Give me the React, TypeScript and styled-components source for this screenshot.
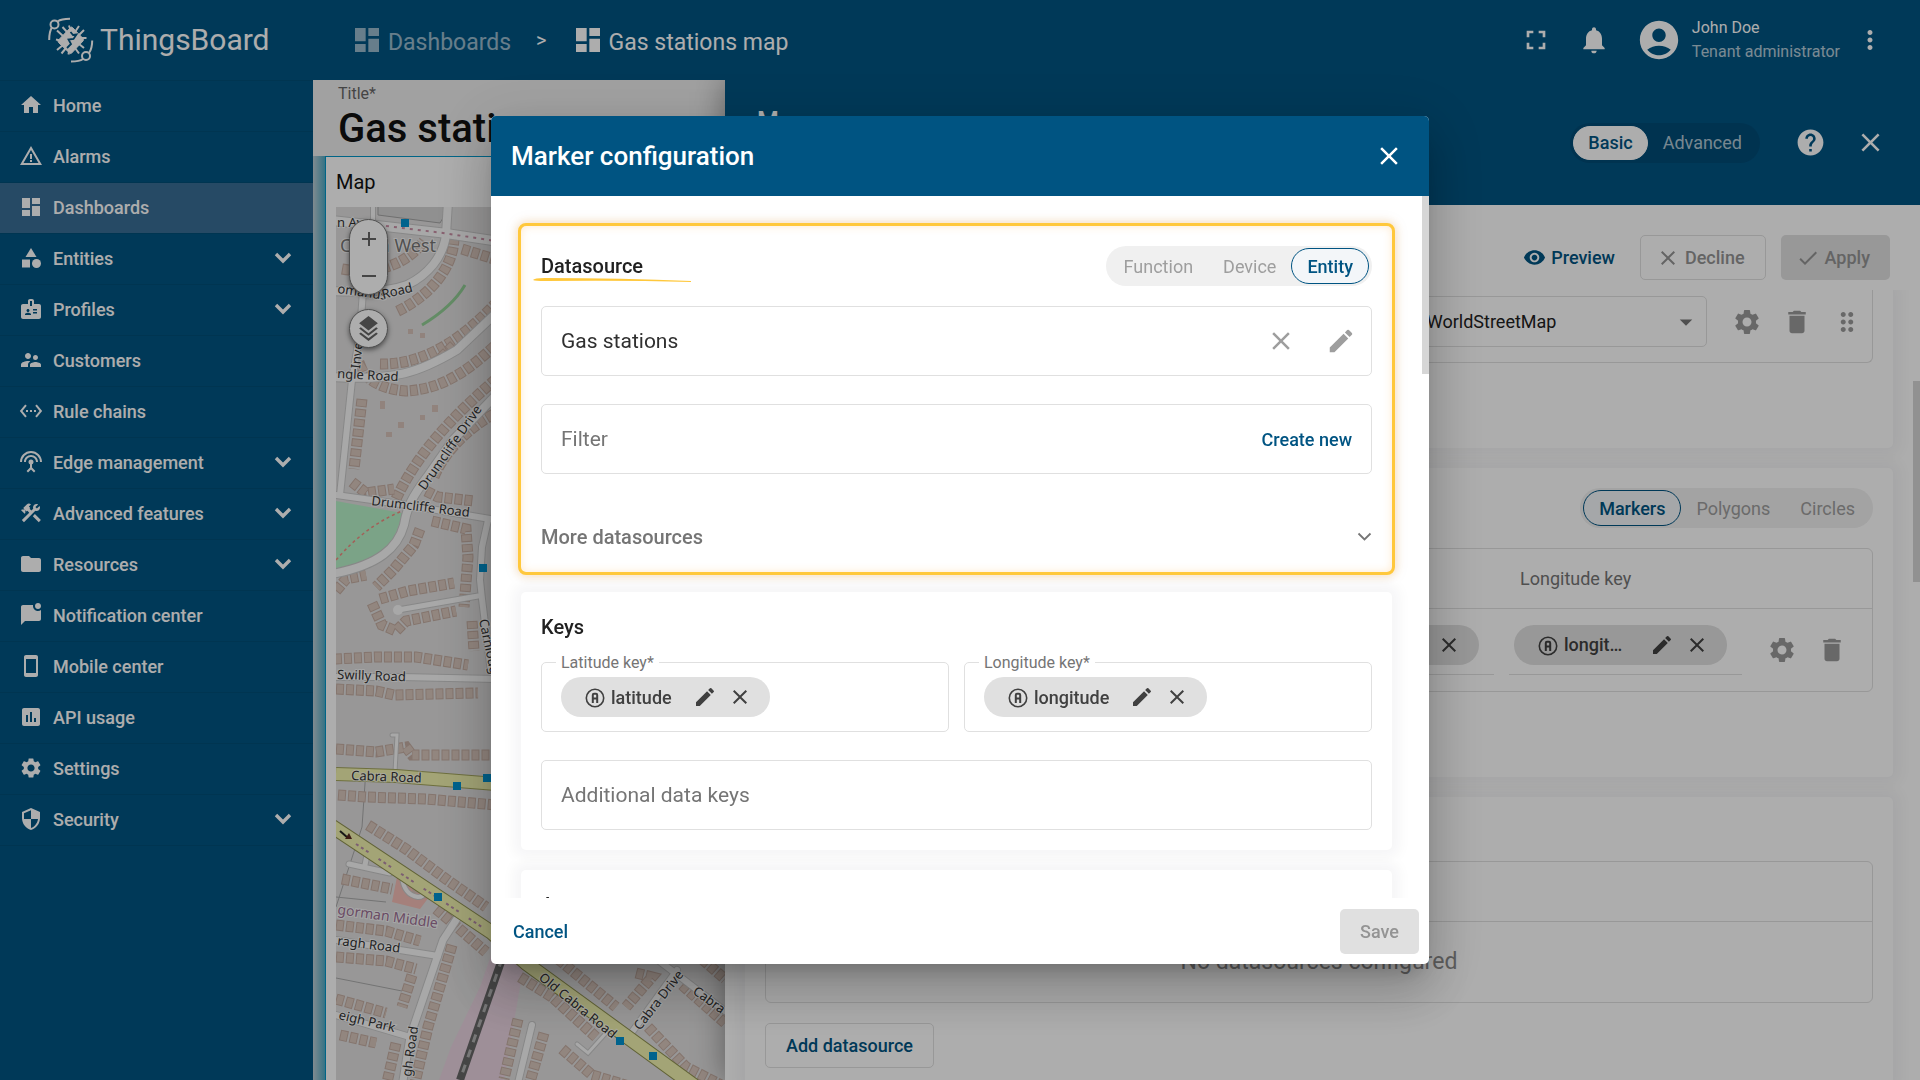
import React from "react";
import styled, { createGlobalStyle, css } from "styled-components";
import {
  MdHome,
  MdWarningAmber,
  MdDashboard,
  MdCategory,
  MdBadge,
  MdSupervisorAccount,
  MdSettingsEthernet,
  MdSettingsInputAntenna,
  MdConstruction,
  MdFolder,
  MdSmartphone,
  MdInsertChart,
  MdSettings,
  MdSecurity,
  MdFullscreen,
  MdNotifications,
  MdAccountCircle,
  MdMoreVert,
  MdHelp,
  MdClose,
  MdVisibility,
  MdCheck,
  MdDelete,
  MdDragIndicator,
  MdEdit,
  MdArrowDropDown,
  MdAdd,
  MdRemove,
} from "react-icons/md";

const primary = "#005482";
const line = "#e0e0e0";
const muted = "#757575";

const GlobalStyle = createGlobalStyle`
  *, *::before, *::after { box-sizing: border-box; }
  body {
    margin: 0;
    overflow: hidden;
    font-family: Roboto, "Liberation Sans", sans-serif;
    font-size: 18px;
    color: #212121;
    background: #fff;
  }
  button, input, select { font: inherit; color: inherit; }
  button { border: 0; padding: 0; background: none; cursor: pointer; }
  h1, h2, h3, p { margin: 0; font-weight: 500; }
  svg { display: block; flex: none; }
`;

/* ---------- shell ---------- */

const Shell = styled.div`
  display: grid;
  grid-template-columns: 313px minmax(0, 1fr);
  grid-template-rows: 80px minmax(0, 1fr);
  height: 100vh;
`;

const Brand = styled.a`
  display: flex;
  align-items: center;
  padding-left: 40px;
  background: ${primary};
  color: #fff;
  font-size: 30px;
  line-height: 40px;
  text-decoration: none;
`;

const TopBar = styled.header`
  display: flex;
  align-items: center;
  padding: 0 35px 0 38px;
  background: ${primary};
  color: #fff;
  z-index: 2;
`;

const Crumbs = styled.nav`
  display: flex;
  align-items: center;
  flex: 1;
  font-size: 23px;
  line-height: 28px;
`;

const Crumb = styled.a<{ $faded?: boolean }>`
  display: flex;
  align-items: center;
  gap: 5px;
  color: inherit;
  text-decoration: none;
  opacity: ${(p) => (p.$faded ? 0.6 : 1)};
  & > span { padding-top: 5px; }
`;

const CrumbArrow = styled.span`
  padding: 0 25px;
  font-size: 20px;
`;

const TopActions = styled.div`
  display: flex;
  align-items: center;
  gap: 26px;
`;

const UserBlock = styled.div`
  display: flex;
  align-items: center;
  gap: 10px;
`;

const UserName = styled.div`
  display: flex;
  flex-direction: column;
  padding-right: 5px;
  font-size: 16px;
  line-height: 24px;
  & > span:last-child { opacity: 0.7; }
`;

const SideNav = styled.nav`
  display: flex;
  flex-direction: column;
  background: ${primary};
  color: #fff;
`;

const NavItem = styled.a<{ $active?: boolean }>`
  display: flex;
  align-items: center;
  gap: 10px;
  height: 51px;
  padding: 0 21px 2px 19px;
  border-top: 1px solid #004e78;
  background: ${(p) => (p.$active ? "#386d96" : "transparent")};
  color: inherit;
  font-weight: 500;
  text-decoration: none;
  & > span { flex: 1; }
`;

const NavEnd = styled.div`
  height: 1px;
  background: #004e78;
`;

/* ---------- dashboard ---------- */

const Main = styled.main`
  display: grid;
  grid-template-columns: minmax(0, 1fr) minmax(0, 1195px);
  min-height: 0;
`;

const Board = styled.section`
  display: flex;
  flex-direction: column;
  min-width: 0;
  overflow: hidden;
  background: #eee;
`;

const TitleField = styled.label`
  display: flex;
  flex-direction: column;
  height: 76px;
  padding: 4px 0 0 25px;
  color: #666;
  font-size: 16px;
  line-height: 20px;
`;

const TitleInput = styled.input`
  width: 100%;
  height: 48px;
  padding: 0;
  border: 0;
  background: none;
  color: #111;
  font-size: 40px;
  font-weight: 500;
`;

const WidgetWrap = styled.div`
  display: flex;
  flex: 1;
  min-height: 0;
  padding-left: 12px;
  background: linear-gradient(90deg, #bcccd3, #4fa9c4 12px);
`;

const Widget = styled.article`
  display: flex;
  flex: 1;
  flex-direction: column;
  min-width: 0;
  padding-left: 10px;
  border: solid #0096c8;
  border-width: 1px 0 0 1px;
  background: #fff;
`;

const WidgetTitle = styled.h2`
  height: 50px;
  color: #111;
  font-size: 20px;
  font-weight: 400;
  line-height: 50px;
`;

const MapBox = styled.div`
  position: relative;
  flex: 1;
  min-height: 0;
  overflow: hidden;
  background: #e0dfdf;
`;

const MapControls = styled.div`
  position: absolute;
  top: 12px;
  left: 13px;
  display: flex;
  flex-direction: column;
  gap: 14px;
`;

const MapPill = styled.div`
  display: flex;
  flex-direction: column;
  width: 39px;
  border: 1px solid #777;
  border-radius: 20px;
  background: #fff;
  box-shadow: 0 2px 5px rgba(0, 0, 0, 0.5);
  color: #666;
`;

const MapButton = styled.button`
  display: grid;
  place-items: center;
  height: 37px;
`;

/* ---------- drawer ---------- */

const Drawer = styled.aside`
  display: flex;
  flex-direction: column;
  min-width: 0;
  min-height: 0;
  background: #fff;
  box-shadow: 0 0 30px rgba(0, 0, 0, 0.4);
  z-index: 1;
`;

const DrawerHead = styled.header`
  display: flex;
  align-items: center;
  height: 125px;
  flex: none;
  padding: 0 34px 0 32px;
  background: ${primary};
  color: #fff;
`;

const DrawerTitle = styled.h2`
  flex: 1;
  align-self: flex-start;
  padding-top: 26px;
  font-size: 25px;
  line-height: 32px;
`;

const DrawerIcons = styled.div`
  display: flex;
  gap: 28px;
  padding-left: 34px;
`;

const Toggle = styled.div<{ $dark?: boolean }>`
  display: flex;
  align-items: center;
  height: 40px;
  padding: 0 3px;
  border-radius: 20px;
  background: ${(p) => (p.$dark ? "#004c77" : "#f0f0f0")};
`;

const Segment = styled.button<{ $on?: boolean; $dark?: boolean }>`
  height: ${(p) => (p.$dark ? 34 : 36)}px;
  padding: 0 14px;
  border: 1px solid transparent;
  border-radius: 18px;
  color: ${(p) => (p.$dark ? "rgba(255,255,255,.7)" : "#9e9e9e")};
  ${(p) =>
    p.$on &&
    css`
      padding: 0 ${p.$dark ? 14 : 15}px;
      border-color: ${p.$dark ? "#fff" : primary};
      background: ${p.$dark ? "#fff" : "#f3f6f9"};
      color: ${primary};
      font-weight: 500;
    `}
`;

const DrawerActions = styled.div`
  display: flex;
  align-items: center;
  justify-content: flex-end;
  gap: 15px;
  height: 85px;
  flex: none;
  padding: 30px 30px 10px;
`;

const Action = styled.button<{ $kind: "text" | "outline" | "fill" | "link"; $icon?: boolean }>`
  display: flex;
  align-items: center;
  justify-content: center;
  gap: 5px;
  height: 45px;
  padding: 0 20px 0 ${(p) => (p.$icon ? 15 : 20)}px;
  border-radius: 5px;
  font-weight: 500;
  color: ${primary};
  ${(p) => p.$kind === "text" && css`padding: 0 10px;`}
  ${(p) => p.$kind === "link" && css`padding: 0 5px;`}
  ${(p) => p.$kind === "outline" && css`border: 1px solid ${line};`}
  ${(p) => p.$kind === "fill" && css`background: ${line};`}
  &:disabled { color: #949494; }
`;

const DrawerBody = styled.div`
  position: relative;
  display: flex;
  flex: 1;
  flex-direction: column;
  gap: 20px;
  min-height: 0;
  overflow: hidden;
  padding: 0 27px 0 20px;
`;

const Panel = styled.section<{ $first?: boolean; $tail?: number }>`
  flex: none;
  padding: ${(p) => (p.$first ? 0 : 20)}px 20px ${(p) => p.$tail ?? 20}px;
  border-radius: ${(p) => (p.$first ? "0 0 5px 5px" : "5px")};
  background: #fff;
  box-shadow: 0 0 13px 8px rgba(11, 17, 51, 0.04);
`;

const PanelHead = styled.div<{ $plain?: boolean }>`
  display: flex;
  align-items: center;
  justify-content: space-between;
  height: ${(p) => (p.$plain ? 24 : 40)}px;
  margin-bottom: 20px;
`;

const PanelTitle = styled.h3`
  font-size: 20px;
  line-height: 24px;
`;

const Thumb = styled.div<{ $top: number; $height: number }>`
  position: absolute;
  top: ${(p) => p.$top}px;
  right: 0;
  width: 7px;
  height: ${(p) => p.$height}px;
  background: #d6d6d6;
`;

const LayerRow = styled.div`
  display: flex;
  align-items: center;
  padding: 6px 9px 15px 20px;
  border: 1px solid ${line};
  border-top: 0;
  border-radius: 0 0 6px 6px;
  color: #9a9a9a;
`;

const SelectBox = styled.label`
  display: flex;
  align-items: center;
  width: 331px;
  height: 51px;
  margin-left: auto;
  padding-right: 5px;
  border: 1px solid ${line};
  border-radius: 5px;
  color: ${muted};
`;

const Select = styled.select`
  flex: 1;
  appearance: none;
  height: 49px;
  padding: 0 0 0 15px;
  border: 0;
  background: none;
  color: #212121;
`;

const IconButton = styled.button<{ $size?: number }>`
  display: grid;
  place-items: center;
  width: ${(p) => p.$size ?? 32}px;
  height: ${(p) => p.$size ?? 32}px;
`;

const TableFrame = styled.div`
  border: 1px solid ${line};
  border-radius: 6px;
`;

const KeyTable = styled.table`
  width: 100%;
  border-collapse: collapse;
  table-layout: fixed;
  & th {
    height: 59px;
    padding: 0 0 0 26px;
    border-bottom: 1px solid ${line};
    color: ${muted};
    font-weight: 400;
    text-align: left;
  }
  & td {
    height: 83px;
    padding: 0 0 0 15px;
    vertical-align: middle;
  }
`;

const KeyCell = styled.div`
  display: flex;
  padding: 0 15px 9px 5px;
  border-bottom: 1px solid ${line};
`;

const RowActions = styled.div<{ $lead: number }>`
  display: flex;
  gap: 18px;
  padding-left: ${(p) => p.$lead}px;
  color: #9a9a9a;
`;

const Chip = styled.span<{ $fill?: boolean }>`
  display: flex;
  align-items: center;
  height: 40px;
  padding: 0 18px 0 22px;
  border-radius: 20px;
  background: ${line};
  color: #404040;
  font-weight: 500;
  ${(p) => p.$fill && css`flex: 1;`}
`;

const ChipText = styled.span<{ $fill?: boolean }>`
  margin: 0 21px 0 4px;
  ${(p) => p.$fill && css`flex: 1;`}
`;

const ChipButtons = styled.span`
  display: flex;
  gap: 11px;
`;

const EmptyFrame = styled(TableFrame)`
  height: 142px;
`;

const EmptyHead = styled.div`
  height: 60px;
  border-bottom: 1px solid ${line};
`;

const EmptyText = styled.p`
  color: #8a8a8a;
  font-size: 23px;
  font-weight: 400;
  line-height: 80px;
  text-align: center;
`;

const ButtonLine = styled.div`
  display: flex;
  padding-top: 20px;
`;

/* ---------- dialog ---------- */

const Backdrop = styled.div`
  position: fixed;
  inset: 0;
  z-index: 10;
  display: grid;
  place-items: center;
  background: rgba(0, 0, 0, 0.32);
`;

const Dialog = styled.div`
  display: flex;
  flex-direction: column;
  width: min(938px, 90vw);
  overflow: hidden;
  border-radius: 5px;
  background: #fff;
  box-shadow: 0 14px 19px -9px rgba(0, 0, 0, 0.2), 0 30px 48px 4px rgba(0, 0, 0, 0.14),
    0 11px 58px 10px rgba(0, 0, 0, 0.12);
`;

const DialogHead = styled.header`
  display: flex;
  align-items: center;
  justify-content: space-between;
  height: 80px;
  padding: 0 24px 0 20px;
  background: ${primary};
  color: #fff;
`;

const DialogTitle = styled.h1`
  font-size: 26px;
  line-height: 32px;
`;

const DialogBody = styled.div`
  position: relative;
  display: flex;
  flex-direction: column;
  gap: 20px;
  height: 65vh;
  padding: 30px 37px 0 30px;
  overflow: hidden;
`;

const Card = styled.section<{ $focus?: boolean }>`
  position: relative;
  flex: none;
  padding: 20px;
  border-radius: 5px;
  background: #fff;
  box-shadow: 0 0 13px 8px rgba(11, 17, 51, 0.04);
  ${(p) =>
    p.$focus &&
    css`
      outline: 3px solid #ffc83c;
      box-shadow: 0 0 8px 4px rgba(255, 170, 60, 0.3), inset 0 0 8px rgba(255, 170, 60, 0.25),
        0 0 13px 8px rgba(11, 17, 51, 0.04);
    `}
`;

const CardHead = styled.div<{ $plain?: boolean }>`
  position: relative;
  display: flex;
  align-items: center;
  justify-content: space-between;
  height: ${(p) => (p.$plain ? 30 : 40)}px;
  margin-bottom: 20px;
`;

const Swash = styled.svg`
  position: absolute;
  left: -8px;
  bottom: 2px;
`;

const Fields = styled.div`
  display: grid;
  grid-template-columns: 1fr 1fr;
  gap: 28px 15px;
`;

const Field = styled.div<{ $wide?: boolean }>`
  position: relative;
  display: flex;
  align-items: center;
  height: 70px;
  padding: 0 14px 0 19px;
  border: 1px solid ${line};
  border-radius: 5px;
  ${(p) => p.$wide && css`grid-column: 1 / -1;`}
`;

const FieldLabel = styled.span`
  position: absolute;
  top: -10px;
  left: 14px;
  padding: 0 5px;
  background: #fff;
  color: ${muted};
  font-size: 16px;
  line-height: 20px;
`;

const TextInput = styled.input`
  flex: 1;
  min-width: 0;
  height: 40px;
  padding: 0;
  border: 0;
  background: none;
  outline: 0;
  color: #303030;
  font-size: 21px;
  &::placeholder { color: ${muted}; opacity: 1; }
`;

const FieldIcons = styled.div`
  display: flex;
  gap: 28px;
  color: #9e9e9e;
`;

const More = styled.button`
  display: flex;
  align-items: center;
  justify-content: space-between;
  width: 100%;
  height: 30px;
  margin-top: 48px;
  color: ${muted};
  font-size: 20px;
  font-weight: 500;
`;

const DialogFoot = styled.footer`
  display: flex;
  align-items: center;
  justify-content: space-between;
  height: 66px;
  padding: 0 10px 0 12px;
`;

/* ---------- drawings ---------- */

const Logo = () => (
  <svg width="60" height="64" viewBox="0 0 60 64" fill="none" stroke="currentColor" strokeWidth="2" aria-hidden="true">
    <circle cx="14.5" cy="16.5" r="4" />
    <path d="M17.5 13.5C21 11 25 10.8 30 10.8M11.8 19.6C9.6 23 9.2 27 9.2 32" />
    <circle cx="46" cy="48" r="4" />
    <path d="M49 45C51.5 41.5 52.2 38 52.2 32.5M43 51C40 53.2 36 53.5 31 53.5" />
    <path d="M17 22.5L23 28M22.5 19L27 24M16 31.5L20 32.5M39 18L35 24M44 22L39 27M46.5 30H41M44 40L39 36M39 45.5L35 40M28.5 46.5L29.5 40M17 42L23 37M21.5 45.5L26 40M29 17.5L30.5 22" />
    <path
      d="M32.5 19.5L43 30.5Q44 31.5 43 33L31.5 45.2Q30.5 46 29.5 45L18.5 34.5Q17.5 33.3 18.5 32L30.5 19.6Q31.5 18.6 32.5 19.5Z"
      fill="currentColor"
      strokeWidth="1"
    />
    <path d="M30.5 24L33 27L36.5 26.5L33.5 31L28.5 31.5L31 36L27 40" stroke={primary} strokeWidth="1.8" />
  </svg>
);

const MessageBadge = () => (
  <svg width="24" height="24" viewBox="0 0 24 24" fill="currentColor" aria-hidden="true">
    <path d="M22 7V16C22 17.1 21.1 18 20 18H6L2 22V4C2 2.9 2.9 2 4 2H14.1C14 2.3 14 2.7 14 3C14 5.8 16.2 8 19 8C20.1 8 21.2 7.6 22 7M16 3C16 4.7 17.3 6 19 6S22 4.7 22 3 20.7 0 19 0 16 1.3 16 3Z" />
  </svg>
);

const LayersTriple = () => (
  <svg width="25" height="25" viewBox="0 0 24 24" fill="currentColor" aria-hidden="true">
    <path d="M12 0L3 7L4.63 8.27L12 14L19.36 8.27L21 7L12 0M19.37 10.73L12 16.47L4.62 10.74L3 12L12 19L21 12L19.37 10.73M19.37 15.73L12 21.47L4.62 15.74L3 17L12 24L21 17L19.37 15.73Z" />
  </svg>
);

const NavChevron = () => (
  <svg width="18" height="12" viewBox="0 0 18 12" fill="none" stroke="currentColor" strokeWidth="3.4" aria-hidden="true">
    <path d="M2 2L9 9L16 2" />
  </svg>
);

const ThinChevron = () => (
  <svg width="15" height="10" viewBox="0 0 15 10" fill="none" stroke="currentColor" strokeWidth="1.8" aria-hidden="true">
    <path d="M1.5 1.5L7.5 7.5L13.5 1.5" />
  </svg>
);

const AttributeIcon = () => (
  <svg width="24" height="24" viewBox="0 0 24 24" fill="none" stroke="currentColor" aria-hidden="true">
    <circle cx="12" cy="13" r="8.7" strokeWidth="1.6" />
    <path d="M9.8 18V10Q9.8 8.8 11 8.8H13Q14.2 8.8 14.2 10V18M9.8 13.5H14.2" strokeWidth="2" />
  </svg>
);

const roadPaths: Array<[string, number]> = [
  ["M37 -5V15", 4],
  ["M0 14L54 20L107 26L160 34", 9],
  ["M112 -5L110 28C107 50 92 68 71 78C48 86 24 85 -4 84", 8],
  ["M27 84L24 126L16 173L4 288", 6],
  ["M-4 170C60 174 84 165 121 143L175 92", 8],
  ["M160 188L117 233L91 270C76 290 71 300 68 318C62 340 44 358 -4 367", 8],
  ["M0 288L71 298L160 313", 6],
  ["M152 313L146 340L144 373L146 392L155 465", 6],
  ["M62 403L142 389", 5],
  ["M-4 470L65 470L160 472", 6],
  ["M56 528H61L59 565", 3],
  ["M13 657L54 666M31 648L29 658", 5],
  ["M122 710L107 733L74 830L66 880", 7],
  ["M0 733L102 749", 6],
  ["M0 808L74 830", 6],
  ["M66 670Q68 688 82 690Q88 690 90 684", 4],
  ["M341 763L291 832", 6],
  ["M318 750L389 804", 6],
  ["M196 818L181 880", 6],
  ["M241 837L252 846L270 826", 3],
];

const houseRows = [
  "M6 62C40 68 70 58 88 34",
  "M118 30C118 62 92 90 60 105",
  "M126 42L158 52",
  "M44 157C90 158 128 130 160 96",
  "M30 158C20 162 36 182 70 184C110 182 136 160 164 134",
  "M118 138L104 152",
  "M26 192L18 262",
  "M60 292C80 250 110 215 160 172",
  "M98 270C110 240 140 216 160 206",
  "M16 275L30 286L58 282",
  "M90 284L102 290L138 294",
  "M84 322L78 338L58 362L40 380",
  "M96 314L130 322L132 350L128 400",
  "M0 384L10 372L30 368",
  "M44 392L72 384L118 376",
  "M36 396L46 418L60 424L70 414L120 404",
  "M136 414L138 444",
  "M-2 452L40 450L80 450L132 458",
  "M0 482L40 484L58 488L142 486",
  "M0 542L40 545L70 540L76 548L160 548",
  "M2 588L30 590L90 592L160 598",
  "M32 618L70 642L110 672L150 700",
  "M6 672L56 682",
  "M0 718L50 724L84 734",
  "M116 738L112 752L92 820L78 880",
  "M0 750L50 754L80 762",
  "M76 768L66 800",
  "M0 792L50 806",
  "M4 828L40 836",
  "M60 836L50 880",
  "M100 702L112 712L150 745",
  "M184 770L216 790L260 830",
  "M222 752L280 800",
  "M300 766L316 770L290 800",
  "M182 812L168 872",
  "M208 826L194 875",
  "M226 842L256 868L296 880",
  "M312 820L350 860L389 880",
  "M346 778L389 816",
  "M366 752L389 772",
];

const markers = [
  [69, 16],
  [147, 361],
  [121, 579],
  [151, 571],
  [102, 690],
  [284, 834],
  [317, 849],
];

const StreetLabel = styled.text`
  fill: #333;
  font-family: "Noto Sans", "Open Sans", sans-serif;
  font-size: 13px;
  paint-order: stroke;
  stroke: rgba(255, 255, 255, 0.7);
  stroke-width: 2px;
`;

const PlaceLabel = styled(StreetLabel)<{ $tone: string; $size: number }>`
  fill: ${(p) => p.$tone};
  font-size: ${(p) => p.$size}px;
`;

const StreetMap = () => (
  <svg width="389" height="873" viewBox="0 0 389 873" fill="none" role="img" aria-label="Street map">
    <rect width="389" height="873" fill="#e0dfdf" />
    <path d="M0 294L66 306Q58 345 30 355Q16 361 0 361Z" fill="#b6f0c8" />
    <path d="M0 353C20 330 40 315 66 304" stroke="#f08c80" strokeWidth="1.5" strokeDasharray="3 3" />
    <path d="M86 118Q116 100 129 78" stroke="#93cf96" strokeWidth="3" />
    <path d="M42 -2V8L104 16Q108 12 108 4V-2Z" fill="#d4d4d4" stroke="#a5a5a5" />
    <path d="M61 670L56 695L84 702L96 686L88 680Z" fill="#f3bdb5" />
    <path d="M158 740L144 780L115 840L103 873H168L190 745Z" fill="#e9d3e0" />
    <path d="M30 562L26 620L0 700M0 690L50 695M0 771L66 784" stroke="#aaa" />
    {houseRows.map((d) => (
      <g key={d}>
        <path d={d} stroke="#c4ada2" strokeWidth="11" strokeDasharray="8 2" />
        <path d={d} stroke="#d8c6bc" strokeWidth="9" strokeDasharray="6 4" strokeDashoffset="-1" />
      </g>
    ))}
    <path d="M50 225h6v5h-6zM62 215h6v6h-6zM84 208h5v5h-5zM72 122h5v5h-5zM84 126h5v5h-5zM96 198h6v7h-6zM44 194h5v8h-5z" fill="#d6c2b8" />
    <path d="M78 672h8v14h-10z" fill="#d6c2b8" />
    {roadPaths.map(([d, w]) => (
      <path key={d} d={d} stroke="#c8c8c8" strokeWidth={w + 2} strokeLinecap="round" />
    ))}
    {roadPaths.map(([d, w]) => (
      <path key={d} d={d} stroke="#f8f8f8" strokeWidth={w} strokeLinecap="round" />
    ))}
    <circle cx="62" cy="403" r="5" fill="#f8f8f8" />
    <path d="M50 19L107 26L160 34" stroke="#c98fa5" strokeWidth="2" strokeDasharray="3 5" />
    <path d="M0 567L60 569L160 577" stroke="#a2a45c" strokeWidth="14" />
    <path d="M0 567L60 569L160 577" stroke="#f0f2ae" strokeWidth="12" />
    <path d="M-6 618L155 725L191 757L360 880" stroke="#8f9150" strokeWidth="15" />
    <path d="M-6 618L155 725L191 757L360 880" stroke="#f0f2ae" strokeWidth="13" />
    <path d="M20 637L155 726" stroke="#b78ca8" strokeWidth="2" strokeDasharray="3 3 3 3 3 12" />
    <path d="M4 624L12 631" stroke="#222" strokeWidth="2" />
    <path d="M16 632L9 632L13 626Z" fill="#5a2a20" />
    <path d="M166 752L124 873" stroke="#666" strokeWidth="8" />
    <path d="M166 752L124 873" stroke="#b0b0b0" strokeWidth="3" strokeDasharray="8 8" />
    <StreetLabel x="1" y="20">n Ave</StreetLabel>
    <PlaceLabel $tone="#777" $size={18} x="4" y="45">Cabra West</PlaceLabel>
    <StreetLabel transform="translate(1 86) rotate(8)">omanus</StreetLabel>
    <StreetLabel transform="translate(47 92) rotate(-14)">Road</StreetLabel>
    <StreetLabel transform="translate(24 162) rotate(-84)">Inver</StreetLabel>
    <StreetLabel transform="translate(1 171) rotate(3)">ngle Road</StreetLabel>
    <StreetLabel transform="translate(89 284) rotate(-55)">Drumcliffe Drive</StreetLabel>
    <StreetLabel transform="translate(35 298) rotate(7)">Drumcliffe Road</StreetLabel>
    <StreetLabel transform="translate(143 413) rotate(78)">Carnloug</StreetLabel>
    <StreetLabel transform="translate(1 472) rotate(2)">Swilly Road</StreetLabel>
    <StreetLabel transform="translate(15 573) rotate(2)">Cabra Road</StreetLabel>
    <PlaceLabel $tone="#9c6f93" $size={14} transform="translate(1 707) rotate(8)">gorman Middle</PlaceLabel>
    <StreetLabel transform="translate(1 738) rotate(7)">ragh Road</StreetLabel>
    <StreetLabel transform="translate(2 812) rotate(13)">eigh Park</StreetLabel>
    <StreetLabel transform="translate(75 870) rotate(-82)">gh Road</StreetLabel>
    <StreetLabel transform="translate(202 772) rotate(39)">Old Cabra Road</StreetLabel>
    <StreetLabel transform="translate(304 824) rotate(-52)">Cabra Drive</StreetLabel>
    <StreetLabel transform="translate(356 786) rotate(36)">Cabra</StreetLabel>
    {markers.map(([x, y]) => (
      <rect key={`${x}-${y}`} x={x - 4} y={y - 4} width="8" height="8" fill="#0092d0" />
    ))}
  </svg>
);

/* ---------- pieces ---------- */

const navItems: Array<{ label: string; icon: React.ReactNode; open?: boolean; active?: boolean }> = [
  { label: "Home", icon: <MdHome size={24} /> },
  { label: "Alarms", icon: <MdWarningAmber size={24} /> },
  { label: "Dashboards", icon: <MdDashboard size={24} />, active: true },
  { label: "Entities", icon: <MdCategory size={24} />, open: true },
  { label: "Profiles", icon: <MdBadge size={24} />, open: true },
  { label: "Customers", icon: <MdSupervisorAccount size={24} /> },
  { label: "Rule chains", icon: <MdSettingsEthernet size={24} /> },
  { label: "Edge management", icon: <MdSettingsInputAntenna size={24} />, open: true },
  { label: "Advanced features", icon: <MdConstruction size={24} />, open: true },
  { label: "Resources", icon: <MdFolder size={24} />, open: true },
  { label: "Notification center", icon: <MessageBadge /> },
  { label: "Mobile center", icon: <MdSmartphone size={24} /> },
  { label: "API usage", icon: <MdInsertChart size={24} /> },
  { label: "Settings", icon: <MdSettings size={24} /> },
  { label: "Security", icon: <MdSecurity size={24} />, open: true },
];

const KeyChip = ({ name, fill }: { name: string; fill?: boolean }) => (
  <Chip $fill={fill}>
    <AttributeIcon />
    <ChipText $fill={fill}>{name}</ChipText>
    <ChipButtons>
      <IconButton $size={24} aria-label="Edit key">
        <MdEdit size={24} />
      </IconButton>
      <IconButton $size={24} aria-label="Remove key">
        <MdClose size={24} />
      </IconButton>
    </ChipButtons>
  </Chip>
);

const Segments = ({ items, active, dark }: { items: string[]; active: string; dark?: boolean }) => (
  <Toggle $dark={dark} role="group">
    {items.map((item) => (
      <Segment key={item} $dark={dark} $on={item === active} aria-pressed={item === active}>
        {item}
      </Segment>
    ))}
  </Toggle>
);

const MarkerDialog = () => (
  <Backdrop>
    <Dialog role="dialog" aria-modal="true" aria-labelledby="dialog-title">
      <DialogHead>
        <DialogTitle id="dialog-title">Marker configuration</DialogTitle>
        <IconButton aria-label="Close">
          <MdClose size={30} />
        </IconButton>
      </DialogHead>
      <DialogBody>
        <Card $focus>
          <CardHead>
            <PanelTitle>Datasource</PanelTitle>
            <Segments items={["Function", "Device", "Entity"]} active="Entity" />
            <Swash width="158" height="6" viewBox="0 0 158 6" aria-hidden="true">
              <path d="M0 2Q1 0 12 0Q90 0 158 3V4Q90 2 12 3Q2 3 0 2Z" fill="#ffc83c" />
            </Swash>
          </CardHead>
          <Fields>
            <Field $wide>
              <TextInput aria-label="Entity alias" defaultValue="Gas stations" />
              <FieldIcons>
                <IconButton aria-label="Clear">
                  <MdClose size={30} />
                </IconButton>
                <IconButton aria-label="Edit alias">
                  <MdEdit size={30} />
                </IconButton>
              </FieldIcons>
            </Field>
            <Field $wide>
              <TextInput aria-label="Filter" placeholder="Filter" />
              <Action $kind="link">Create new</Action>
            </Field>
          </Fields>
          <More aria-expanded="false">
            More datasources
            <ThinChevron />
          </More>
        </Card>
        <Card>
          <CardHead $plain>
            <PanelTitle>Keys</PanelTitle>
          </CardHead>
          <Fields>
            <Field>
              <FieldLabel>Latitude key*</FieldLabel>
              <KeyChip name="latitude" />
            </Field>
            <Field>
              <FieldLabel>Longitude key*</FieldLabel>
              <KeyChip name="longitude" />
            </Field>
            <Field $wide>
              <TextInput aria-label="Additional data keys" placeholder="Additional data keys" />
            </Field>
          </Fields>
        </Card>
        <Card>
          <CardHead $plain>
            <PanelTitle>Appearance</PanelTitle>
          </CardHead>
        </Card>
        <Thumb $top={0} $height={178} />
      </DialogBody>
      <DialogFoot>
        <Action $kind="text">Cancel</Action>
        <Action $kind="fill" disabled>
          Save
        </Action>
      </DialogFoot>
    </Dialog>
  </Backdrop>
);

export default function App() {
  return (
    <>
      <GlobalStyle />
      <Shell>
        <Brand href="#home">
          <Logo />
          ThingsBoard
        </Brand>
        <TopBar>
          <Crumbs aria-label="Breadcrumb">
            <Crumb href="#dashboards" $faded>
              <MdDashboard size={32} />
              <span>Dashboards</span>
            </Crumb>
            <CrumbArrow>&gt;</CrumbArrow>
            <Crumb href="#map">
              <MdDashboard size={32} />
              <span>Gas stations map</span>
            </Crumb>
          </Crumbs>
          <TopActions>
            <IconButton aria-label="Fullscreen">
              <MdFullscreen size={32} />
            </IconButton>
            <IconButton aria-label="Notifications">
              <MdNotifications size={32} />
            </IconButton>
            <UserBlock>
              <MdAccountCircle size={46} />
              <UserName>
                <span>John Doe</span>
                <span>Tenant administrator</span>
              </UserName>
              <IconButton $size={30} aria-label="User menu">
                <MdMoreVert size={30} />
              </IconButton>
            </UserBlock>
          </TopActions>
        </TopBar>
        <SideNav aria-label="Main menu">
          {navItems.map((item) => (
            <NavItem key={item.label} href={`#${item.label}`} $active={item.active}>
              {item.icon}
              <span>{item.label}</span>
              {item.open && <NavChevron />}
            </NavItem>
          ))}
          <NavEnd />
        </SideNav>
        <Main>
          <Board>
            <TitleField>
              Title*
              <TitleInput defaultValue="Gas stations" />
            </TitleField>
            <WidgetWrap>
              <Widget>
                <WidgetTitle>Map</WidgetTitle>
                <MapBox>
                  <StreetMap />
                  <MapControls>
                    <MapPill>
                      <MapButton aria-label="Zoom in">
                        <MdAdd size={24} />
                      </MapButton>
                      <MapButton aria-label="Zoom out">
                        <MdRemove size={24} />
                      </MapButton>
                    </MapPill>
                    <MapPill>
                      <MapButton aria-label="Layers">
                        <LayersTriple />
                      </MapButton>
                    </MapPill>
                  </MapControls>
                </MapBox>
              </Widget>
            </WidgetWrap>
          </Board>
          <Drawer>
            <DrawerHead>
              <DrawerTitle>Map</DrawerTitle>
              <Segments dark items={["Basic", "Advanced"]} active="Basic" />
              <DrawerIcons>
                <IconButton aria-label="Help">
                  <MdHelp size={31} />
                </IconButton>
                <IconButton aria-label="Close panel">
                  <MdClose size={31} />
                </IconButton>
              </DrawerIcons>
            </DrawerHead>
            <DrawerActions>
              <Action $kind="text">
                <MdVisibility size={23} />
                Preview
              </Action>
              <Action $kind="outline" $icon disabled>
                <MdClose size={24} />
                Decline
              </Action>
              <Action $kind="fill" $icon disabled>
                <MdCheck size={24} />
                Apply
              </Action>
            </DrawerActions>
            <DrawerBody>
              <Panel $first $tail={85}>
                <LayerRow>
                  <SelectBox>
                    <Select aria-label="Map layer" defaultValue="esri">
                      <option value="esri">Esri.WorldStreetMap</option>
                    </Select>
                    <MdArrowDropDown size={30} />
                  </SelectBox>
                  <RowActions $lead={24}>
                    <IconButton aria-label="Layer settings">
                      <MdSettings size={30} />
                    </IconButton>
                    <IconButton aria-label="Delete layer">
                      <MdDelete size={30} />
                    </IconButton>
                    <IconButton aria-label="Drag layer">
                      <MdDragIndicator size={30} />
                    </IconButton>
                  </RowActions>
                </LayerRow>
              </Panel>
              <Panel $tail={85}>
                <PanelHead>
                  <PanelTitle>Overlays</PanelTitle>
                  <Segments items={["Markers", "Polygons", "Circles"]} active="Markers" />
                </PanelHead>
                <TableFrame>
                  <KeyTable>
                    <colgroup>
                      <col />
                      <col width="248" />
                      <col width="248" />
                      <col width="130" />
                    </colgroup>
                    <thead>
                      <tr>
                        <th>Source</th>
                        <th>Latitude key</th>
                        <th>Longitude key</th>
                        <th aria-label="Actions" />
                      </tr>
                    </thead>
                    <tbody>
                      <tr>
                        <td />
                        <td>
                          <KeyCell>
                            <KeyChip fill name="latitude" />
                          </KeyCell>
                        </td>
                        <td>
                          <KeyCell>
                            <KeyChip fill name="longit…" />
                          </KeyCell>
                        </td>
                        <td>
                          <RowActions $lead={9}>
                            <IconButton aria-label="Marker settings">
                              <MdSettings size={30} />
                            </IconButton>
                            <IconButton aria-label="Delete marker">
                              <MdDelete size={30} />
                            </IconButton>
                          </RowActions>
                        </td>
                      </tr>
                    </tbody>
                  </KeyTable>
                </TableFrame>
              </Panel>
              <Panel>
                <PanelHead $plain>
                  <PanelTitle>Additional datasources</PanelTitle>
                </PanelHead>
                <EmptyFrame>
                  <EmptyHead />
                  <EmptyText>No datasources configured</EmptyText>
                </EmptyFrame>
                <ButtonLine>
                  <Action $kind="outline">Add datasource</Action>
                </ButtonLine>
              </Panel>
              <Thumb $top={91} $height={201} />
            </DrawerBody>
          </Drawer>
        </Main>
      </Shell>
      <MarkerDialog />
    </>
  );
}
